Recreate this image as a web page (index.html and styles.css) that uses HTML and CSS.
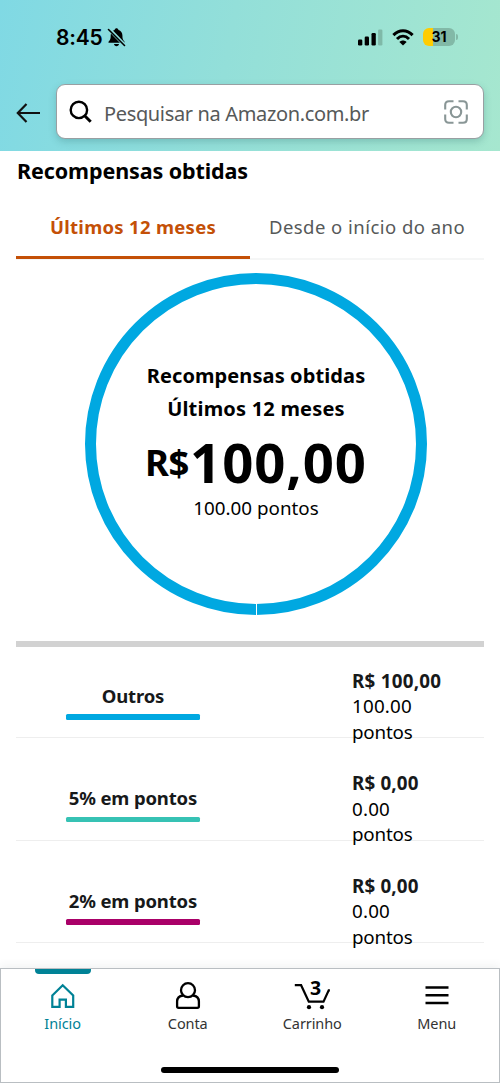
FILE: index.html
```html
<!DOCTYPE html>
<html lang="pt-BR">
<head>
<meta charset="utf-8">
<title>Recompensas obtidas</title>
<link rel="stylesheet" href="styles.css">
</head>
<body>
<div class="app">
  <header class="header">
    <div class="status">
      <div class="clock"><span class="time">8:45</span>
        <svg class="bell" width="20" height="20" viewBox="0 0 20 20"><path d="M2.200 14.800c-.8 0-1-.8-.5-1.400 1.700-1.800 2-2.800 2-6.200C3.700 4.400 5.300 2.500 7.500 1.900 7.900.8 8.700.3 9.500.3s1.700.5 2 1.600c2.400.7 3.900 2.600 3.900 5.300 0 3.400.4 4.400 2 6.200.5.6.2 1.400-.5 1.400zM7 16h5c-.2 1.300-1.200 2.200-2.500 2.200S7.200 17.300 7 16z"/><path d="M2.500 1.500 17 16.500" stroke="#8adcdc" stroke-width="3.600"/><path d="M1.500 1.500 17.500 17.500" stroke="#000" stroke-width="1.600" stroke-linecap="round"/></svg>
      </div>
      <div class="signals">
        <svg width="26" height="18" viewBox="0 0 26 18"><rect x="1" y="11.500" width="4.300" height="6" rx="1.200"/><rect x="7.700" y="8.500" width="4.300" height="9" rx="1.200"/><rect x="14.500" y="5" width="4.300" height="12.500" rx="1.200"/><rect x="21.100" y="1.500" width="4.300" height="16" rx="1.200" fill="#7fb9a8"/></svg>
        <svg width="22" height="18" viewBox="0 0 22 18"><g fill="none" stroke="#000" stroke-width="3"><path d="M1.400 7.100C7 1.400 15 1.400 20.600 7.100"/><path d="M5 11c3.600-3.600 8.400-3.600 12 0"/></g><path d="M7.400 14c2-2 5.200-2 7.200 0L11 17.600z"/></svg>
        <div class="power"><div class="battery">31</div><i class="battery-tip"></i></div>
      </div>
    </div>
    <div class="search-row">
      <svg class="back" width="26" height="20" viewBox="0 0 26 20"><path d="M10.500 1 1.800 10l8.700 9M1.800 10H24" fill="none" stroke="#111" stroke-width="2.200"/></svg>
      <div class="search">
        <svg width="24" height="24" viewBox="0 0 24 24" fill="none" stroke="#000"><circle cx="9.900" cy="9.900" r="8.200" stroke-width="2.400"/><path d="m15.700 15.700 6 6" stroke-width="3"/></svg>
        <span class="placeholder">Pesquisar na Amazon.com.br</span>
        <svg width="24" height="24" viewBox="0 0 24 24" fill="none" stroke="#899696" stroke-width="2.100"><path d="M1.200 9.500V5q0-3.800 3.800-3.800h4.500M14.500 1.200H19q3.800 0 3.800 3.800v4.500M22.800 14.500V19q0 3.800-3.800 3.800h-4.500M9.500 22.800H5q-3.800 0-3.800-3.800v-4.500"/><circle cx="12" cy="12" r="5.200"/></svg>
      </div>
    </div>
  </header>

  <main class="content">
    <h1 class="title">Recompensas obtidas</h1>
    <div class="tabs">
      <div class="tab active"><span>Últimos 12 meses</span></div>
      <div class="tab"><span>Desde o início do ano</span></div>
    </div>
    <section class="ring">
      <div class="ring-label">Recompensas obtidas</div>
      <div class="ring-period">Últimos 12 meses</div>
      <div class="amount"><span class="currency">R$</span><span class="value">100,00</span></div>
      <div class="points">100.00 pontos</div>
      <i class="ring-split"></i>
    </section>
    <div class="rows">
      <div class="row"><div class="category outros">Outros</div><div class="figures"><b class="money hundred">R$ 100,00</b><span class="number">100.00</span><span class="unit">pontos</span></div></div>
      <div class="row"><div class="category five">5% em pontos</div><div class="figures"><b class="money">R$ 0,00</b><span class="number">0.00</span><span class="unit">pontos</span></div></div>
      <div class="row"><div class="category two">2% em pontos</div><div class="figures"><b class="money">R$ 0,00</b><span class="number">0.00</span><span class="unit">pontos</span></div></div>
    </div>
  </main>

  <nav class="nav">
    <div class="nav-items">
      <div class="nav-item current">
        <svg width="36" height="30" viewBox="0 0 36 30" fill="none" stroke="#008296" stroke-width="2.200"><path d="M7.300 13.500 17.700 3.200l10.500 10.300v11.400h-7.300v-7.300h-6.300v7.300H7.300z"/></svg>
        <span>Início</span>
      </div>
      <div class="nav-item">
        <svg width="36" height="30" viewBox="0 0 36 30" fill="none" stroke="#000" stroke-width="2.300"><circle cx="18" cy="8.200" r="7"/><path d="M13 13.500c-3.500.5-5.900 2.500-5.900 6v4.800q0 1.500 1.500 1.500h18.800q1.500 0 1.500-1.500v-4.800c0-3.500-2.400-5.500-5.900-6"/></svg>
        <span>Conta</span>
      </div>
      <div class="nav-item">
        <svg width="36" height="30" viewBox="0 0 36 30"><path d="M.8 3.200h6.300l7.700 16.500h14.700l5.200-11.300h1.200" fill="none" stroke="#000" stroke-width="2.200"/><circle cx="15" cy="25.200" r="2.100"/><circle cx="28" cy="25.200" r="2.100"/><text class="count" x="21.500" y="12.500" text-anchor="middle">3</text></svg>
        <span>Carrinho</span>
      </div>
      <div class="nav-item">
        <svg width="36" height="30" viewBox="0 0 36 30"><path d="M6.500 5.500h23M6.500 13.300h23M6.500 21h23" stroke="#000" stroke-width="2.400"/></svg>
        <span>Menu</span>
      </div>
    </div>
    <div class="home-bar"></div>
  </nav>
</div>
</body>
</html>
```
FILE: styles.css
```css
* { box-sizing: border-box; }
body { margin: 0; background: #fff; color: #000; font-family: "Noto Sans", "Open Sans", sans-serif; }
svg { display: block; flex: none; overflow: visible; }
.app { width: 500px; height: 1083px; display: flex; flex-direction: column; overflow: hidden; }

.header { height: 151px; flex: none; background: linear-gradient(100deg, #80d9e4 0%, #93dfd9 45%, #a6e7cf 100%); }
.status { height: 84px; padding: 27px 42px 0 56px; display: flex; justify-content: space-between; align-items: flex-start; }
.clock { display: flex; align-items: center; gap: 4px; height: 21px; }
.time { font: 600 21px/20px Inter, sans-serif; letter-spacing: -.2px; padding-top: 1px; }
.bell { margin-top: 1px; }
.signals { display: flex; align-items: center; gap: 9px; height: 20px; }
.power { display: flex; align-items: center; gap: 1px; }
.battery { width: 32px; height: 18px; border-radius: 6px; background: linear-gradient(90deg, #ffcc01 31%, #82b9a7 31%); font: 700 14px/18px Inter, sans-serif; text-align: center; }
.battery-tip { width: 2px; height: 6px; border-radius: 0 2px 2px 0; background: #82b9a7; }
.search-row { display: flex; align-items: center; padding: 0 16px 0 16px; gap: 14px; }
.back { margin-top: 3px; }
.search { flex: 1; height: 55px; border: 1px solid #999fa2; border-radius: 9px; background: #fff; box-shadow: 0 3px 7px #25646440; display: flex; align-items: center; padding: 0 15px 0 12px; }
.placeholder { flex: 1; margin-left: 11px; font-size: 20px; letter-spacing: -.35px; line-height: 30px; color: #565959; padding-top: 5px; white-space: nowrap; }

.content { padding: 0 16px 0 17px; flex: 1; min-height: 0; }
.title { margin: 5px 0 0; font-size: 21.500px; line-height: 30px; font-weight: 700; letter-spacing: -.1px; }
.tabs { height: 74px; display: grid; grid-template-columns: 1fr 1fr; border-bottom: 2px solid #f5f6f6; margin-left: -1px; }
.tab { display: flex; justify-content: center; padding-top: 26px; font-size: 18.500px; line-height: 30px; letter-spacing: .46px; color: #565959; white-space: nowrap; }
.active { height: 73px; border-bottom: 3px solid #c45007; color: #c45007; font-weight: 700; letter-spacing: .3px; }
.ring { position: relative; width: 342px; height: 342px; border: 11.500px solid #00a8e1; border-radius: 50%; margin: 13px 0 0 68px; display: flex; flex-direction: column; align-items: center; padding-top: 75px; white-space: nowrap; }
.ring-label, .ring-period { font-size: 20px; line-height: 33px; font-weight: 700; letter-spacing: .1px; }
.ring-period { letter-spacing: .2px; }
.amount { display: flex; align-items: center; height: 73px; font-weight: 700; gap: 1px; }
.currency { font-size: 36.500px; line-height: 70px; letter-spacing: -.4px; }
.value { font-size: 54.500px; line-height: 70px; letter-spacing: .9px; }
.points { font-size: 18.800px; line-height: 20px; }
.ring-split { position: absolute; left: 160px; bottom: -12px; width: 1px; height: 13px; background: #fff; }
.rows { margin: 26px 0 0 -1px; border-top: 6px solid #d2d2d2; }
.row { height: 102.500px; display: flex; justify-content: space-between; white-space: nowrap; background: linear-gradient(#eee, #eee) 0 90px / 100% 1px no-repeat; }
.category { width: 134px; margin-left: 50px; padding-top: 33.500px; text-align: center; font-size: 18.500px; line-height: 30px; font-weight: 700; letter-spacing: -.15px; color: #17191a; }
.category::after { content: ""; display: block; height: 5.500px; margin-top: 3.500px; border-radius: 1.500px; }
.outros::after { background: #00a8e1; }
.five::after { background: #36c2b4; }
.two::after { background: #a90068; }
.figures { width: 132px; padding-top: 21.500px; display: flex; flex-direction: column; font-size: 18.800px; line-height: 25.700px; }
.money { color: #17191a; font-weight: 700; letter-spacing: .15px; }
.number { letter-spacing: .2px; }
.hundred { letter-spacing: .25px; }
.unit { letter-spacing: -.2px; }

.nav { height: 115px; flex: none; border: 1.500px solid #b9bec2; background: #fff; box-shadow: 0 -3px 8px #2f414110; display: flex; flex-direction: column; align-items: center; justify-content: space-between; padding-bottom: 9px; }
.nav-items { width: 100%; display: grid; grid-template-columns: repeat(4, 1fr); }
.nav-item { position: relative; height: 66px; display: flex; flex-direction: column; align-items: center; padding-top: 13px; font-size: 14.500px; line-height: 22px; color: #333; font-weight: 400; letter-spacing: -.1px; }
.current { color: #008296; left: -.7px; }
.current::before { content: ""; position: absolute; top: 0; width: 56px; height: 5px; border-radius: 0 0 4px 4px; background: #008296; }
.count { font-size: 19.500px; font-weight: 700; }
.home-bar { width: 178px; height: 6px; border-radius: 3px; background: #000; }
```
